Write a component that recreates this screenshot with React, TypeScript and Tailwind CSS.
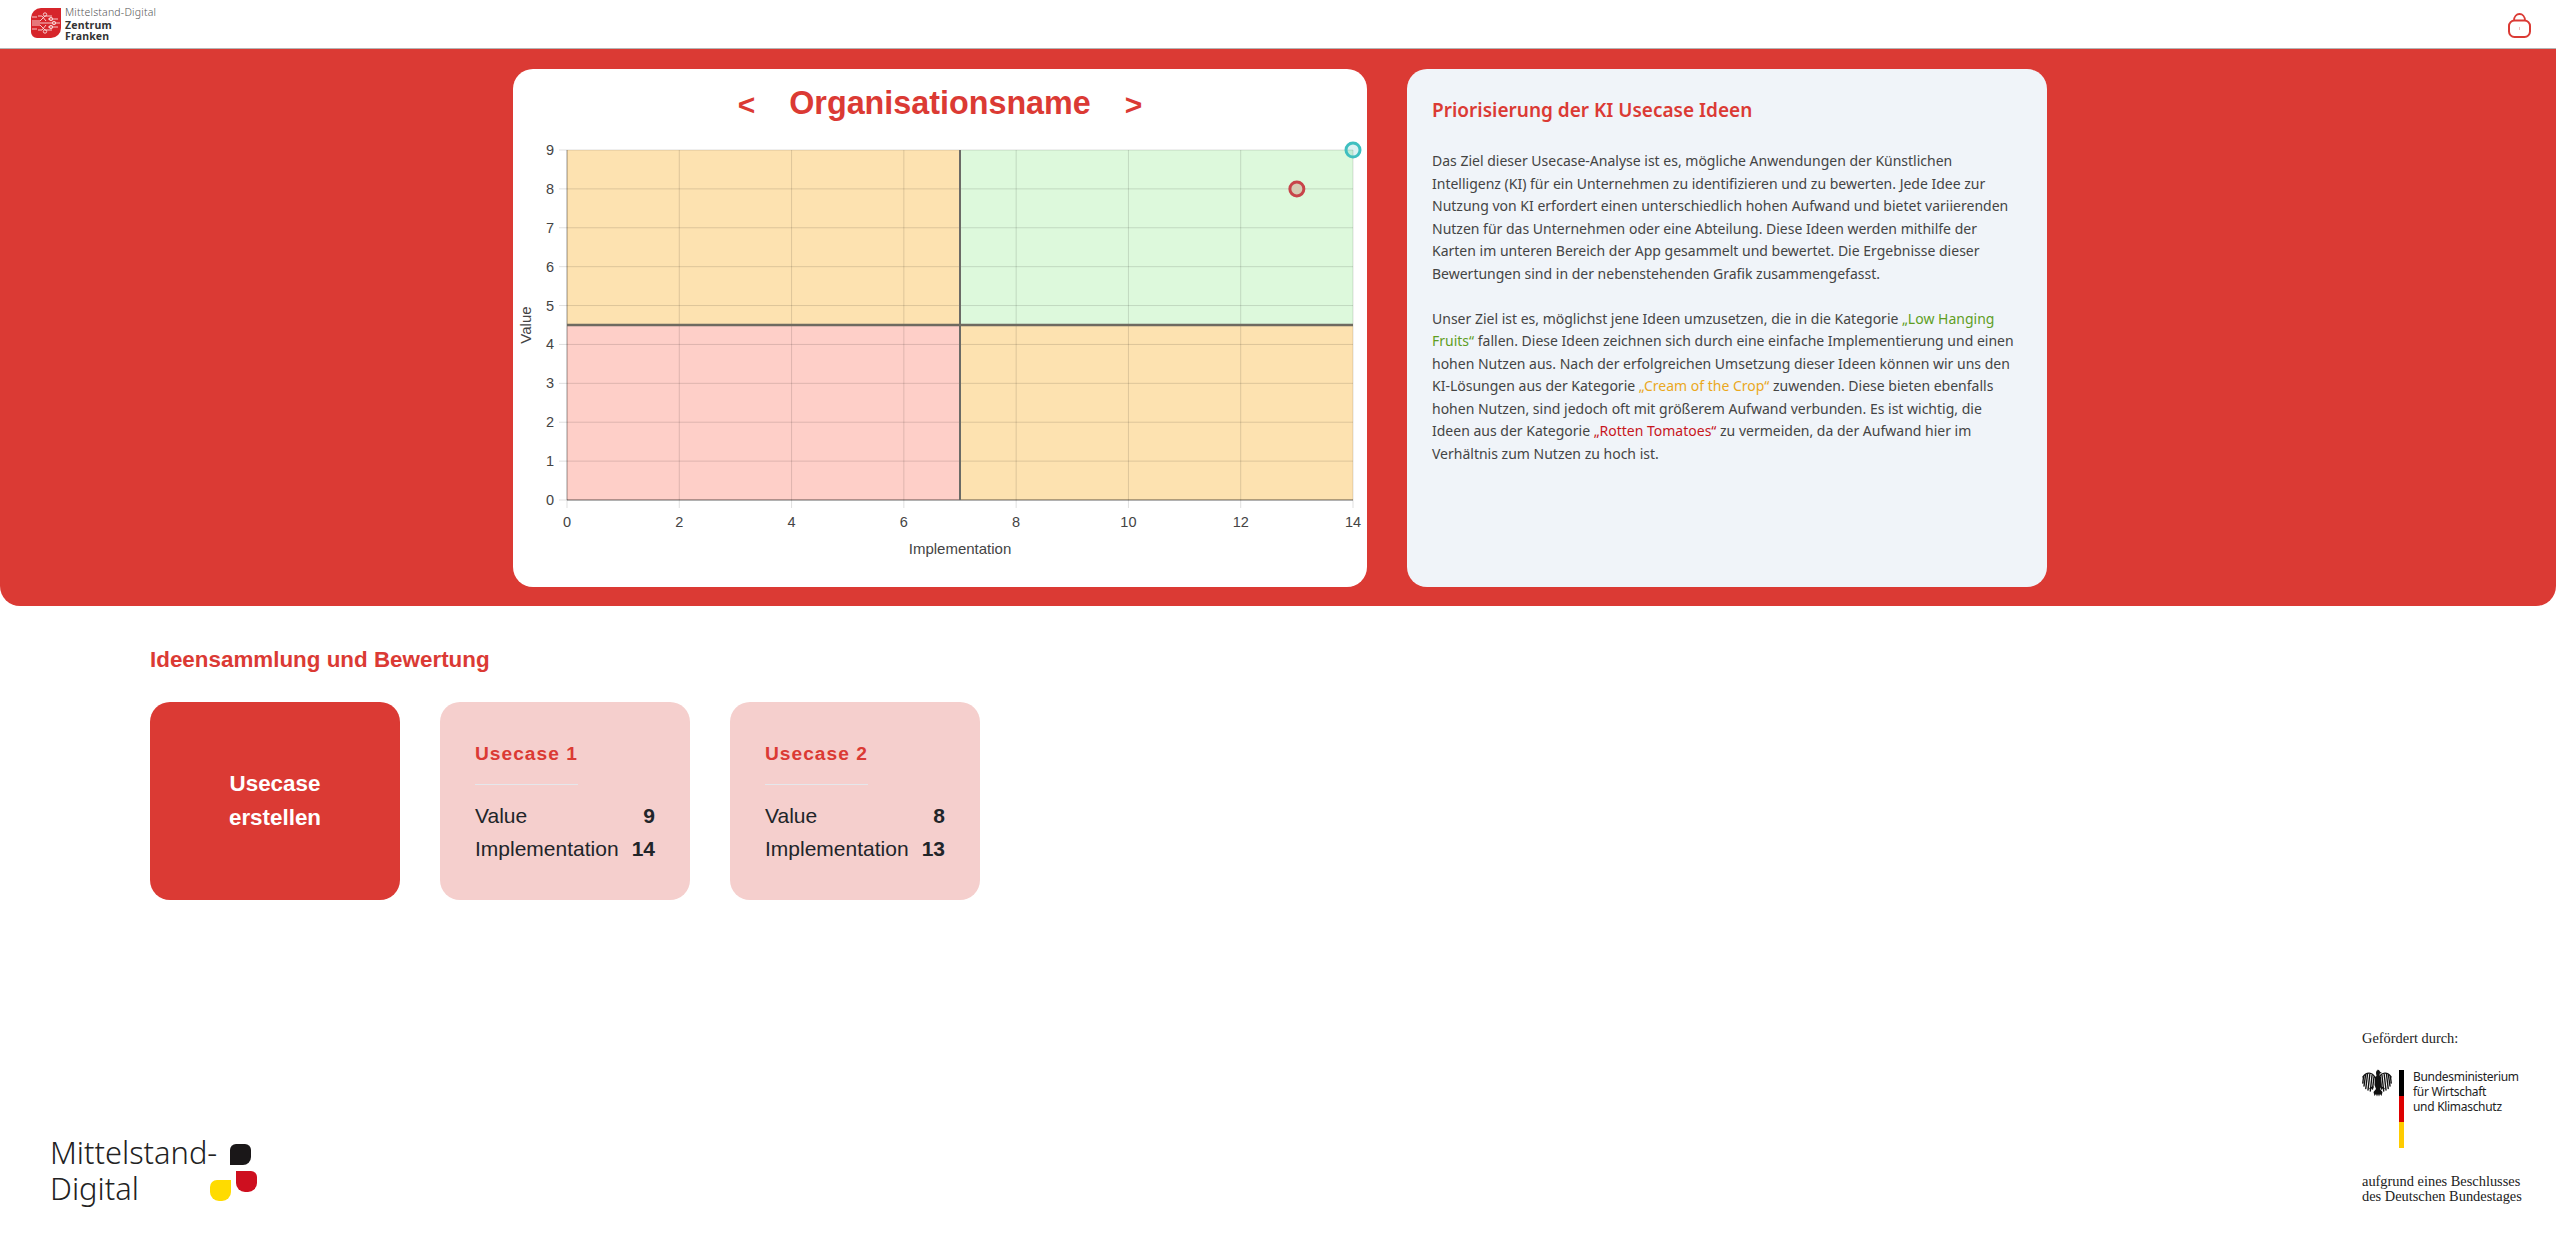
const RED = '#db3a34';

const plot = { left: 50, right: 836, top: 10, bottom: 360 };
const xPos = (v: number) => plot.left + ((plot.right - plot.left) * v) / 14;
const yPos = (v: number) => plot.bottom - ((plot.bottom - plot.top) * v) / 9;

function Chart() {
  const xTicks = [0, 2, 4, 6, 8, 10, 12, 14];
  const yTicks = [0, 1, 2, 3, 4, 5, 6, 7, 8, 9];
  return (
    <svg width="846" height="430" className="block overflow-visible" fontFamily="'Liberation Sans', Arial, sans-serif">
      <rect x={xPos(0)} y={yPos(9)} width={xPos(7) - xPos(0)} height={yPos(4.5) - yPos(9)} fill="#fde2b0" />
      <rect x={xPos(7)} y={yPos(9)} width={xPos(14) - xPos(7)} height={yPos(4.5) - yPos(9)} fill="#ddf9dc" />
      <rect x={xPos(0)} y={yPos(4.5)} width={xPos(7) - xPos(0)} height={yPos(0) - yPos(4.5)} fill="#fecfc8" />
      <rect x={xPos(7)} y={yPos(4.5)} width={xPos(14) - xPos(7)} height={yPos(0) - yPos(4.5)} fill="#fde2b0" />

      {xTicks.map((t) => (
        <g key={t}>
          <line x1={xPos(t)} x2={xPos(t)} y1={plot.top} y2={plot.bottom + 8} stroke="rgba(0,0,0,0.13)" />
          <text x={xPos(t)} y={plot.bottom + 27} textAnchor="middle" fontSize="14.5" fill="#444">{t}</text>
        </g>
      ))}
      {yTicks.map((t) => (
        <g key={t}>
          <line x1={plot.left - 8} x2={plot.right} y1={yPos(t)} y2={yPos(t)} stroke="rgba(0,0,0,0.13)" />
          <text x={plot.left - 13} y={yPos(t) + 5} textAnchor="end" fontSize="14.5" fill="#444">{t}</text>
        </g>
      ))}
      <line x1={plot.left} x2={plot.left} y1={plot.top} y2={plot.bottom} stroke="rgba(0,0,0,0.3)" />
      <line x1={plot.left} x2={plot.right} y1={plot.bottom} y2={plot.bottom} stroke="rgba(0,0,0,0.35)" strokeWidth="1.5" />
      <line x1={xPos(7)} x2={xPos(7)} y1={plot.top} y2={plot.bottom} stroke="#6b6b66" strokeWidth="2" />
      <line x1={plot.left} x2={plot.right} y1={yPos(4.5)} y2={yPos(4.5)} stroke="#6e6a60" strokeWidth="2.5" />

      <circle cx={xPos(14)} cy={yPos(9)} r="7" fill="rgba(75,192,192,0.2)" stroke="#3fbfc0" strokeWidth="3" />
      <circle cx={xPos(13)} cy={yPos(8)} r="7" fill="#d5ccb4" stroke="#c8444a" strokeWidth="3" />

      <text x={xPos(7)} y="414" textAnchor="middle" fontSize="15" fill="#444">Implementation</text>
      <text transform={`translate(14 ${yPos(4.5)}) rotate(-90)`} textAnchor="middle" fontSize="15" fill="#444">Value</text>
    </svg>
  );
}

function HeaderLogo() {
  return (
    <div className="flex items-start gap-[4px]">
      <svg width="30" height="30" viewBox="0 0 30 30" className="mt-[8px]">
        <path d="M10 0H30V20a10 10 0 0 1-10 10H6a6 6 0 0 1-6-6V10A10 10 0 0 1 10 0Z" fill="#d6252b" />
        <g stroke="#fbdcdc" strokeWidth="0.9" fill="none">
          <path d="M1 13H9l5-5H21M1 15H22M1 17H9l5 5H21M27 11H17M27 19H17" />
          <path d="M7 8h4l4 5M7 22h4l4-5M22 15h7M1 9h5M1 21h5" />
          <circle cx="14" cy="6.500" r="1.700" /><circle cx="20" cy="11" r="1.700" /><circle cx="23" cy="15" r="1.700" /><circle cx="20" cy="19" r="1.700" /><circle cx="14" cy="23.500" r="1.700" />
        </g>
      </svg>
      <div className="font-['Noto_Sans',sans-serif] text-[10.5px] leading-[11.500px] text-[#333] pt-[7px]">
        <div className="font-light text-[#555] tracking-[0.2px]">Mittelstand-Digital</div>
        <div className="font-bold mt-[1px] tracking-[0.2px]">Zentrum</div>
        <div className="font-bold tracking-[0.2px]">Franken</div>
      </div>
    </div>
  );
}

function MittelstandLogo() {
  return (
    <div className="flex items-start mb-[2px] font-['Noto_Sans',sans-serif] font-light text-[#222] text-[30.800px] leading-[36px]">
      <div className="w-[160px] whitespace-nowrap -mt-[2px]">Mittelstand-<br />Digital</div>
      <svg width="47" height="57" viewBox="0 0 47 57" className="mt-[8px]">
        <path d="M20 6a6 6 0 0 1 6-6h9a6 6 0 0 1 6 6v7a8 8 0 0 1-8 8H20Z" fill="#1a1718" />
        <path d="M26 27H41a6 6 0 0 1 6 6v6a9 9 0 0 1-9 9h-3a9 9 0 0 1-9-9Z" fill="#ce0f1f" />
        <path d="M21 36V48a9 9 0 0 1-9 9H9a9 9 0 0 1-9-9v-5a7 7 0 0 1 7-7Z" fill="#ffdb00" />
      </svg>
    </div>
  );
}

function Eagle() {
  return (
    <svg width="30" height="29" viewBox="0 0 30 29">
      {/* head, body and tail */}
      <path d="M15 0.500c1.800 0 2.800 1 3 2.300l2 1.200-2.200.4-.3 2.600 1.500 1 .5 8-1.500 4 2.500 3-1 4-1.500-2-1 2.500-1-2.500-1 2.500-1-2.500-1.500 2-1-4 2.500-3-1.500-4 .5-8 1.500-1-.5-3c0-1.800 1-3 2-3Z" fill="#111" />
      {/* wings */}
      <g stroke="#111" strokeWidth="1.400" fill="none" strokeLinecap="round">
        <path d="M13 8.500C10 3 4.500 2.500 1 8" />
        <path d="M1.500 8 .8 14M3.500 6.500 2 17M5.500 5.500 3.800 19.500M7.800 5.500 6 21M10 6.500 8.300 22M12 8 10.500 20" />
        <path d="M17 8.500C20 3 25.500 2.500 29 8" />
        <path d="M28.500 8l.7 6M26.500 6.500 28 17M24.500 5.500l1.700 14M22.200 5.500 24 21M20 6.500 21.700 22M18 8l1.500 12" />
        <path d="M11 18 8 19.500M19 18l3 1.500" />
      </g>
    </svg>
  );
}

function FundingLogo() {
  return (
    <div className="w-[194px] text-[#222] pb-[4px]">
      <div className="font-['Liberation_Serif',serif] text-[14.400px] leading-[16px] h-[39px]">Gefördert durch:</div>
      <div className="flex items-start">
        <Eagle />
        <div className="w-[5px] h-[78px] ml-[7px] mr-[9px] mt-[1px] flex flex-col">
          <div className="flex-1 bg-black" />
          <div className="flex-1 bg-[#dd0000]" />
          <div className="flex-1 bg-[#ffcc00]" />
        </div>
        <div className="font-['Noto_Sans',sans-serif] text-[12px] leading-[15px] tracking-[-0.3px]">
          Bundesministerium<br />für Wirtschaft<br />und Klimaschutz
        </div>
      </div>
      <div className="font-['Liberation_Serif',serif] text-[14.400px] leading-[15px] mt-[26px]">
        aufgrund eines Beschlusses<br />des Deutschen Bundestages
      </div>
    </div>
  );
}

function UsecaseCard({ name, value, implementation }: { name: string; value: number; implementation: number }) {
  return (
    <div className="w-[250px] h-[198px] rounded-[20px] bg-[#f5cfcd] px-[35px] pt-[39px]">
      <h3 className="inline-block text-[19.2px] leading-[26px] font-bold tracking-[1px] text-[#db3a34] pb-[17px] border-b border-[#e5e7eb]">{name}</h3>
      <div className="mt-[15px] text-[21px] leading-[32.500px] text-[#212529]">
        <div className="flex justify-between"><span>Value</span><span className="font-bold">{value}</span></div>
        <div className="flex justify-between"><span>Implementation</span><span className="font-bold">{implementation}</span></div>
      </div>
    </div>
  );
}

export default function App() {
  return (
    <div className="min-h-screen flex flex-col bg-white font-['Liberation_Sans',Arial,sans-serif]">
      <header className="h-[49px] bg-white border-b border-[#b5b5b5] flex justify-between pl-[31px] pr-[25px]">
        <HeaderLogo />
        <svg width="23" height="25" viewBox="0 0 23 25" className="mt-[13px]" fill="none" stroke={RED}>
          <rect x="1" y="7.500" width="21" height="16.500" rx="5.500" strokeWidth="2" />
          <path d="M6 7.500c0-4 2.500-6.500 5.500-6.500s5.500 2.500 5.500 6.500" strokeWidth="1.800" />
          <path d="M11.500 14v3" strokeWidth="1" strokeOpacity="0.35" />
        </svg>
      </header>

      <section className="h-[557px] bg-[#db3a34] rounded-b-[20px] flex justify-center gap-[40px] pt-[20px] pl-[4px]">
        <div className="w-[854px] h-[518px] bg-white rounded-[20px] px-[4px]">
          <div className="h-[71px] pb-[3px] flex items-center justify-center gap-[34px] text-[#db3a34] font-bold">
            <span className="text-[30px] pt-[3px]">&lt;</span>
            <h1 className="text-[32.300px] leading-[40px]">Organisationsname</h1>
            <span className="text-[30px] pt-[3px]">&gt;</span>
          </div>
          <Chart />
        </div>
        <div className="w-[640px] h-[518px] bg-[#f0f4f9] rounded-[20px] px-[25px] pt-[26px] font-['Noto_Sans',sans-serif] text-[#444]">
          <h2 className="text-[19px] leading-[30px] font-semibold text-[#db3a34]">Priorisierung der KI Usecase Ideen</h2>
          <div className="mt-[25px] text-[14px] leading-[22.500px]">
            <p>Das Ziel dieser Usecase-Analyse ist es, mögliche Anwendungen der Künstlichen Intelligenz (KI) für ein Unternehmen zu identifizieren und zu bewerten. Jede Idee zur Nutzung von KI erfordert einen unterschiedlich hohen Aufwand und bietet variierenden Nutzen für das Unternehmen oder eine Abteilung. Diese Ideen werden mithilfe der Karten im unteren Bereich der App gesammelt und bewertet. Die Ergebnisse dieser Bewertungen sind in der nebenstehenden Grafik zusammengefasst.</p>
            <p className="mt-[22.500px]">Unser Ziel ist es, möglichst jene Ideen umzusetzen, die in die Kategorie <span className="text-[#5f9e1f]">„Low Hanging Fruits“</span> fallen. Diese Ideen zeichnen sich durch eine einfache Implementierung und einen hohen Nutzen aus. Nach der erfolgreichen Umsetzung dieser Ideen können wir uns den KI-Lösungen aus der Kategorie <span className="text-[#eaa81e]">„Cream of the Crop“</span> zuwenden. Diese bieten ebenfalls hohen Nutzen, sind jedoch oft mit größerem Aufwand verbunden. Es ist wichtig, die Ideen aus der Kategorie <span className="text-[#c8161d]">„Rotten Tomatoes“</span> zu vermeiden, da der Aufwand hier im Verhältnis zum Nutzen zu hoch ist.</p>
          </div>
        </div>
      </section>

      <section className="pl-[150px] pt-[39px]">
        <h2 className="text-[22.4px] leading-[30px] font-bold text-[#db3a34]">Ideensammlung und Bewertung</h2>
        <div className="flex gap-[40px] mt-[27px]">
          <button className="w-[250px] h-[198px] rounded-[20px] bg-[#db3a34] text-white text-[22.4px] leading-[34px] font-bold">
            Usecase<br />erstellen
          </button>
          <UsecaseCard name="Usecase 1" value={9} implementation={14} />
          <UsecaseCard name="Usecase 2" value={8} implementation={13} />
        </div>
      </section>

      <footer className="mt-auto flex justify-between items-end pl-[50px] pb-[28px]">
        <MittelstandLogo />
        <FundingLogo />
      </footer>
    </div>
  );
}
